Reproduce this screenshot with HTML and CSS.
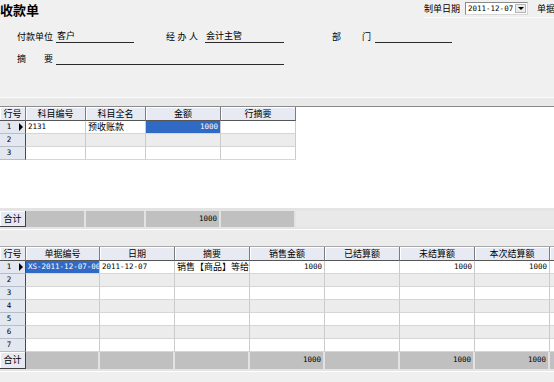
FILE: index.html
```html
<!DOCTYPE html>
<html lang="zh-CN">

<head>
  <meta charset="UTF-8" />
  <meta name="viewport" content="width=device-width, initial-scale=1.0" />
  <title>收款单</title>
  <link rel="stylesheet" href="styles.css">
</head>

<body>
  <div class="head">
    <div class="topbar">
      <h1 class="title">收款单</h1>
      <div class="date-group">
        <span class="label">制单日期</span>
        <div class="date-box">
          <span class="num">2011-12-07</span>
          <span class="drop"></span>
        </div>
        <span class="label next">单据</span>
      </div>
    </div>

    <div class="form-row row-1">
      <div class="field payer">
        <span class="label">付款单位</span>
        <span class="line w-78">客户</span>
      </div>
      <div class="field agent">
        <span class="label spread">经 办 人</span>
        <span class="line w-79">会计主管</span>
      </div>
      <div class="field dept">
        <span class="label spread">部 门</span>
        <span class="line w-77"></span>
      </div>
    </div>
    <div class="form-row row-2">
      <div class="field payer memo">
        <span class="label spread">摘 要</span>
        <span class="line w-228"></span>
      </div>
    </div>
  </div>

  <div class="strip"></div>

  <!-- 科目明细 -->
  <div class="grid grid-1">
    <div class="row header">
      <div class="cell hd">行号</div>
      <div class="cell hd">科目编号</div>
      <div class="cell hd">科目全名</div>
      <div class="cell hd">金额</div>
      <div class="cell hd">行摘要</div>
    </div>
    <div class="row">
      <div class="cell no"><span class="num">1</span><span class="pointer"></span></div>
      <div class="cell num">2131</div>
      <div class="cell">预收账款</div>
      <div class="cell num right selected">1000</div>
      <div class="cell"></div>
    </div>
    <div class="row alt">
      <div class="cell no"><span class="num">2</span></div>
      <div class="cell"></div>
      <div class="cell"></div>
      <div class="cell"></div>
      <div class="cell"></div>
    </div>
    <div class="row">
      <div class="cell no"><span class="num">3</span></div>
      <div class="cell"></div>
      <div class="cell"></div>
      <div class="cell"></div>
      <div class="cell"></div>
    </div>
  </div>

  <div class="gap-1"></div>

  <div class="totals totals-1">
    <div class="tot-label">合计</div>
    <div class="tot"></div>
    <div class="tot"></div>
    <div class="tot num">1000</div>
    <div class="tot"></div>
  </div>

  <div class="gap-2"></div>

  <!-- 结算单据 -->
  <div class="grid grid-2">
    <div class="row header">
      <div class="cell hd">行号</div>
      <div class="cell hd">单据编号</div>
      <div class="cell hd">日期</div>
      <div class="cell hd">摘要</div>
      <div class="cell hd">销售金额</div>
      <div class="cell hd">已结算额</div>
      <div class="cell hd">未结算额</div>
      <div class="cell hd">本次结算额</div>
      <div class="cell hd"></div>
    </div>
    <div class="row">
      <div class="cell no"><span class="num">1</span><span class="pointer"></span></div>
      <div class="cell num selected tight">XS-2011-12-07-00</div>
      <div class="cell num">2011-12-07</div>
      <div class="cell">销售【商品】等给</div>
      <div class="cell num right">1000</div>
      <div class="cell"></div>
      <div class="cell num right">1000</div>
      <div class="cell num right">1000</div>
      <div class="cell"></div>
    </div>
    <div class="row alt">
      <div class="cell no"><span class="num">2</span></div>
      <div class="cell"></div><div class="cell"></div><div class="cell"></div><div class="cell"></div>
      <div class="cell"></div><div class="cell"></div><div class="cell"></div><div class="cell"></div>
    </div>
    <div class="row">
      <div class="cell no"><span class="num">3</span></div>
      <div class="cell"></div><div class="cell"></div><div class="cell"></div><div class="cell"></div>
      <div class="cell"></div><div class="cell"></div><div class="cell"></div><div class="cell"></div>
    </div>
    <div class="row alt">
      <div class="cell no"><span class="num">4</span></div>
      <div class="cell"></div><div class="cell"></div><div class="cell"></div><div class="cell"></div>
      <div class="cell"></div><div class="cell"></div><div class="cell"></div><div class="cell"></div>
    </div>
    <div class="row">
      <div class="cell no"><span class="num">5</span></div>
      <div class="cell"></div><div class="cell"></div><div class="cell"></div><div class="cell"></div>
      <div class="cell"></div><div class="cell"></div><div class="cell"></div><div class="cell"></div>
    </div>
    <div class="row alt">
      <div class="cell no"><span class="num">6</span></div>
      <div class="cell"></div><div class="cell"></div><div class="cell"></div><div class="cell"></div>
      <div class="cell"></div><div class="cell"></div><div class="cell"></div><div class="cell"></div>
    </div>
    <div class="row">
      <div class="cell no"><span class="num">7</span></div>
      <div class="cell"></div><div class="cell"></div><div class="cell"></div><div class="cell"></div>
      <div class="cell"></div><div class="cell"></div><div class="cell"></div><div class="cell"></div>
    </div>
  </div>

  <div class="totals totals-2">
    <div class="tot-label">合计</div>
    <div class="tot"></div>
    <div class="tot"></div>
    <div class="tot"></div>
    <div class="tot num">1000</div>
    <div class="tot"></div>
    <div class="tot num">1000</div>
    <div class="tot num">1000</div>
    <div class="tot"></div>
  </div>

  <div class="foot"></div>
</body>

</html>
```

FILE: styles.css
```css
/* Global Styles */
* {
  box-sizing: border-box;
  margin: 0;
  padding: 0;
}

body {
  width: 554px;
  height: 382px;
  overflow: hidden;
  background: #f0f0f0;
  color: #000000;
  font-family: "Noto Sans CJK SC", sans-serif;
  font-size: 9px;
}

.num {
  font-family: "DejaVu Sans Mono", "Noto Sans CJK SC", monospace;
  font-size: 7.5px;
}

/* Header */
.head {
  height: 98px;
  border-bottom: 1px solid #fbfbfb;
}

.topbar {
  display: flex;
  width: 554px;
  height: 18px;
  overflow: hidden;
}

.title {
  flex: 0 0 424px;
  font-size: 13px;
  font-weight: 700;
  line-height: 19px;
}

.date-group {
  display: flex;
  align-items: center;
  gap: 5px;
  height: 18px;
  border-bottom: 1px solid #fafafa;
  white-space: nowrap;
}

.date-box {
  display: flex;
  align-items: center;
  width: 63px;
  height: 13px;
  padding-left: 2px;
  background: #ffffff;
  border: 1px solid #8a8a8a;
  border-right-color: #d8d8d8;
  border-bottom-color: #d8d8d8;
}

.drop {
  display: flex;
  align-items: center;
  justify-content: center;
  margin-left: auto;
  margin-right: 1px;
  width: 11px;
  height: 9px;
  background: #ececec;
  border: 1px solid #b4b4b4;
}

.drop::after {
  content: "";
  border-left: 3px solid transparent;
  border-right: 3px solid transparent;
  border-top: 3px solid #000000;
}

.next {
  margin-left: 4px;
}

/* Form fields */
.form-row {
  display: flex;
  align-items: flex-end;
  height: 13px;
}

.row-1 {
  margin-top: 12px;
}

.row-2 {
  margin-top: 9px;
}

.field {
  display: flex;
  align-items: flex-end;
}

.label {
  line-height: 12px;
  white-space: nowrap;
}

.field .label {
  width: 39px;
}

.spread {
  text-align: justify;
  text-align-last: justify;
}

.payer {
  margin-left: 17px;
}

.agent {
  margin-left: 32px;
}

.agent .label {
  padding-right: 7px;
}

.dept {
  margin-left: 48px;
}

.dept .label {
  width: 43px;
  padding-right: 4px;
}

.memo .label {
  padding-right: 3px;
}

.line {
  height: 13px;
  line-height: 12px;
  padding-left: 1px;
  border-bottom: 1px solid #2a2a2a;
}

.w-77 { width: 77px; }
.w-78 { width: 78px; }
.w-79 { width: 79px; }
.w-228 { width: 228px; }

.strip {
  height: 8px;
  background: #e9e9e9;
}

/* Grid Styles */
.grid {
  background: #ffffff;
  border-top: 1px solid #8a8a8a;
}

.grid-1 {
  height: 102px;
}

.grid-2 {
  height: 106px;
  border-top-color: #a8a8a8;
}

.row {
  display: grid;
  height: 13px;
}

.grid-1 .row,
.totals-1 {
  grid-template-columns: 26px 60px 60px 75px 75px;
}

.grid-2 .row,
.totals-2 {
  grid-template-columns: 26px 74px 75px 75px 75px 75px 75px 75px 75px;
}

.row.header {
  height: 14px;
}

.cell {
  padding: 0 2px;
  line-height: 12px;
  white-space: nowrap;
  overflow: hidden;
  border-right: 1px solid #cbcbcb;
  border-bottom: 1px solid #d6d6d6;
}

.row.alt .cell {
  background: #ececec;
}

.cell.hd {
  background: #e7eaf3;
  line-height: 13px;
  text-align: center;
  border-right: 1px solid #7c7c7c;
  border-bottom: 1px solid #555555;
  box-shadow: inset 1px 1px 0 #ffffff;
}

.row .cell.no {
  display: grid;
  grid-template-columns: 1fr 7px;
  align-items: center;
  padding: 0;
  background: #e3e7f0;
  text-align: center;
  border-right-color: #4a4a4a;
  border-bottom-color: #b9bdc9;
}

.pointer {
  width: 0;
  height: 0;
  margin-left: 1px;
  border-top: 4px solid transparent;
  border-bottom: 4px solid transparent;
  border-left: 4px solid #000000;
}

.right {
  text-align: right;
}

.cell.selected {
  background: #316ac5;
  color: #ffffff;
}

.tight {
  padding-right: 0;
}

/* Totals */
.gap-1 {
  height: 3px;
  background: #e4e4e4;
}

.totals {
  display: grid;
  background: #e9e9e9;
}

.totals-1 {
  height: 16px;
}

.totals-2 {
  height: 17px;
}

.tot-label {
  background: #e6e9f2;
  text-align: center;
  line-height: 15px;
  border-right: 1px solid #404040;
  border-bottom: 1px solid #404040;
  box-shadow: inset 1px 1px 0 #ffffff;
}

.tot {
  padding-right: 2px;
  background: #c0c0c0;
  text-align: right;
  line-height: 16px;
  border-right: 2px solid #e2e2e2;
}

.gap-2 {
  height: 19px;
  background: #ececec;
  border-top: 2px solid #e4e4e4;
  box-shadow: inset 0 1px 0 #ffffff;
}

.foot {
  height: 13px;
  background: #efefef;
  border-top: 2px solid #e4e4e4;
  box-shadow: inset 0 1px 0 #ffffff;
}
```
